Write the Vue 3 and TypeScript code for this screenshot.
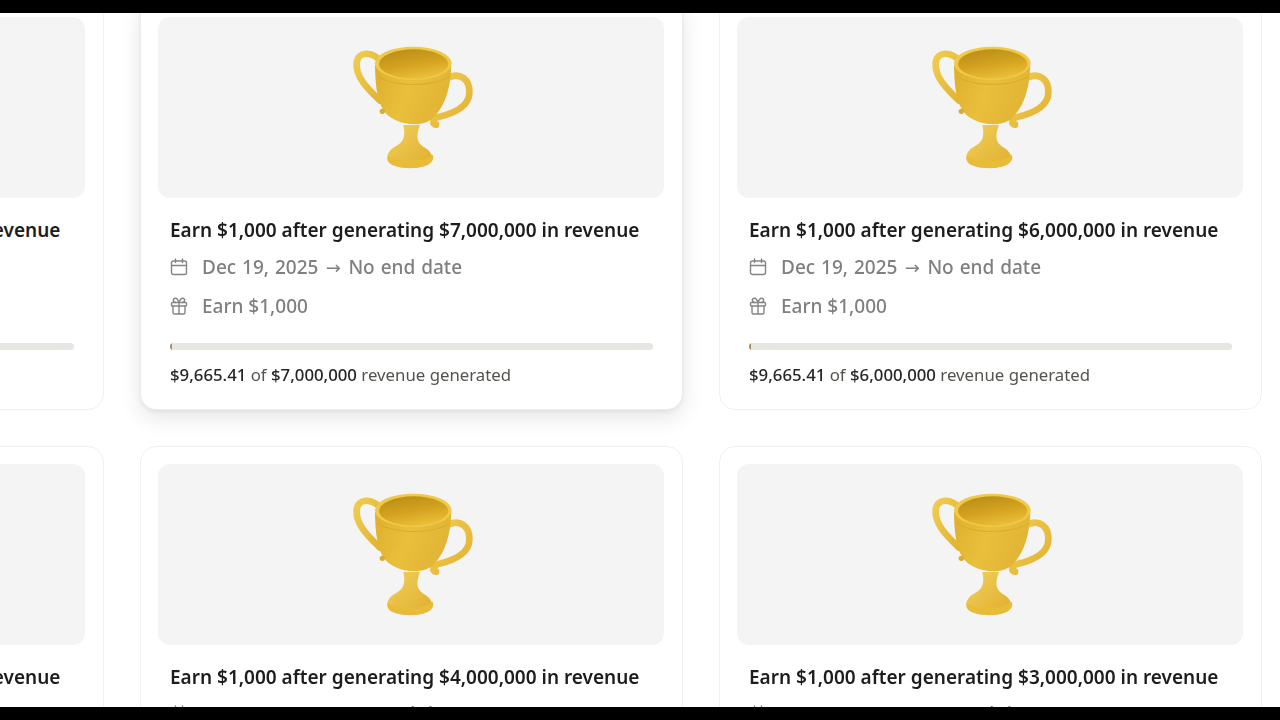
<script setup lang="ts">
interface Goal { amount: string; hovered?: boolean }
const goals: Goal[] = [
  { amount: '$8,000,000' },
  { amount: '$7,000,000', hovered: true },
  { amount: '$6,000,000' },
  { amount: '$5,000,000' },
  { amount: '$4,000,000' },
  { amount: '$3,000,000' },
]
</script>

<template>
  <div class="screen">
    <div class="bar"></div>
    <main class="stage">
      <div class="grid">
        <article v-for="g in goals" :key="g.amount" class="card" :class="{ hovered: g.hovered }">
          <div class="thumb">
            <svg class="trophy" viewBox="0 0 450 450" aria-hidden="true">
              <defs>
                <linearGradient id="body" x1="0" y1="0" x2="1" y2="0.3">
                  <stop offset="0" stop-color="#dfae2c" />
                  <stop offset="0.5" stop-color="#e9bf3c" />
                  <stop offset="1" stop-color="#e2b534" />
                </linearGradient>
                <linearGradient id="inner" x1="0.1" y1="0" x2="0.5" y2="1">
                  <stop offset="0" stop-color="#b98b16" />
                  <stop offset="0.55" stop-color="#d2a21f" />
                  <stop offset="1" stop-color="#eabd36" />
                </linearGradient>
                <linearGradient id="foot" x1="0" y1="0" x2="1" y2="1">
                  <stop offset="0" stop-color="#f2d05a" />
                  <stop offset="1" stop-color="#dfae2e" />
                </linearGradient>
                <linearGradient id="grip" x1="0" y1="0" x2="1" y2="1">
                  <stop offset="0" stop-color="#f0cb50" />
                  <stop offset="1" stop-color="#e2b232" />
                </linearGradient>
              </defs>
              <path class="handle" stroke="url(#grip)" d="M120 212C82 176 46 140 50 98C54 64 94 62 124 94" />
              <path class="handle" stroke="url(#grip)" d="M318 146C362 122 390 150 388 190C386 232 334 252 292 262C278 266 276 284 288 284" />
              <path fill="url(#foot)" d="M190 285C198 322 190 338 162 352C140 366 136 388 150 398C176 420 252 420 272 396C284 380 272 362 250 350C232 338 226 320 240 285Z" />
              <path fill="#e8bb38" d="M144 378C170 398 254 398 278 374C284 386 276 398 262 405C232 419 176 417 152 402C144 396 140 388 144 378Z" />
              <path fill="url(#body)" d="M105 106C106 160 110 210 130 240C160 288 255 298 285 258C318 222 332 170 334 106Z" />
              <circle cx="127" cy="244" r="8" fill="#dcaa2c" />
              <ellipse cx="220" cy="100" rx="115" ry="50" fill="#efc94a" />
              <ellipse cx="221" cy="102" rx="104" ry="44" fill="url(#inner)" />
              <path d="M112 138C160 172 280 172 330 138" fill="none" stroke="#d9ab2e" stroke-width="3" />
            </svg>
          </div>
          <div class="body">
            <h3 class="title">Earn $1,000 after generating {{ g.amount }} in revenue</h3>
            <div class="meta date">
              <svg class="icon" viewBox="0 0 18 18" aria-hidden="true">
                <rect x="1.5" y="3" width="15" height="13.5" rx="2" />
                <path d="M1.5 7.5h15M5.5 1v3.5M12.5 1v3.5" />
              </svg>
              <span>Dec 19, 2025 <span class="arrow">→</span> No end date</span>
            </div>
            <div class="meta reward">
              <svg class="icon" viewBox="0 0 18 18" aria-hidden="true">
                <rect x="1.5" y="5.5" width="15" height="3.5" rx="1" />
                <path d="M3 9v6.5a1.5 1.5 0 0 0 1.5 1.5h9a1.5 1.5 0 0 0 1.5-1.5V9M9 5.5V17M9 5.5C8 2.5 6.8 1.2 5.5 1.2a2.1 2.1 0 0 0 0 4.3M9 5.5c1-3 2.2-4.3 3.5-4.3a2.1 2.1 0 0 1 0 4.3" />
              </svg>
              <span>Earn $1,000</span>
            </div>
            <div class="track"><div class="fill" :style="{ width: '0.4%' }"></div></div>
            <p class="progress"><b>$9,665.41</b> of <b>{{ g.amount }}</b> <span>revenue generated</span></p>
          </div>
        </article>
      </div>
    </main>
    <div class="bar"></div>
  </div>
</template>

<style>
html, body { margin: 0; background: #000; overflow: hidden; }
</style>

<style scoped>
.screen {
  width: 1280px;
  height: 720px;
  display: flex;
  flex-direction: column;
  background: #000;
  overflow: hidden;
  font-family: "Noto Sans", "Open Sans", sans-serif;
}
.bar { height: 13px; flex: none; background: #000; }
.stage { flex: 1; min-height: 0; overflow: hidden; background: #fff; }
.grid {
  display: grid;
  grid-template-columns: repeat(3, 543px);
  column-gap: 36px;
  row-gap: 36px;
  margin: -14px 0 0 -439px;
  filter: blur(0.35px);
}
.card {
  height: 411px;
  box-sizing: border-box;
  padding: 17px 18px 0 17px;
  background: #fff;
  border: 1px solid #f0f0f0;
  border-radius: 16px;
}
.card.hovered {
  border-color: #ececec;
  box-shadow: 0 8px 22px rgba(0, 0, 0, 0.1), 0 2px 5px rgba(0, 0, 0, 0.06);
}
.thumb {
  height: 181px;
  border-radius: 12px;
  background: #f4f4f4;
  display: flex;
  align-items: center;
  justify-content: center;
}
.trophy { width: 150px; height: 150px; margin: 0 0 5px 8px; flex: none; }
.handle { fill: none; stroke-width: 20; stroke-linecap: round; }
.body { padding: 0 12px; }
.title {
  margin: 19px 0 0;
  font-size: 19px;
  line-height: 26px;
  font-weight: 600;
  color: #1d1d1d;
  white-space: nowrap;
}
.meta {
  display: flex;
  align-items: center;
  gap: 14px;
  height: 26px;
  font-size: 19px;
  font-weight: 500;
  color: #807f7e;
  white-space: nowrap;
}
.date { margin-top: 11px; word-spacing: 1px; }
.arrow { font-family: "DejaVu Sans", sans-serif; font-weight: 400; font-size: 18px; margin: 0 1.5px; }
.reward { margin-top: 13px; }
.icon {
  width: 18px;
  height: 18px;
  flex: none;
  fill: none;
  stroke: #858483;
  stroke-width: 1.4;
  stroke-linecap: round;
  stroke-linejoin: round;
}
.track {
  height: 7px;
  margin-top: 24px;
  width: 483px;
  border-radius: 4px;
  background: #e7e5e1;
  overflow: hidden;
}
.fill { height: 100%; background: #a88a5f; }
.progress {
  margin: 14px 0 0;
  font-size: 16.8px;
  line-height: 22px;
  color: #55534f;
  white-space: nowrap;
}
.progress b { font-weight: 500; color: #262626; }
.progress span { color: #55534f; }
</style>
